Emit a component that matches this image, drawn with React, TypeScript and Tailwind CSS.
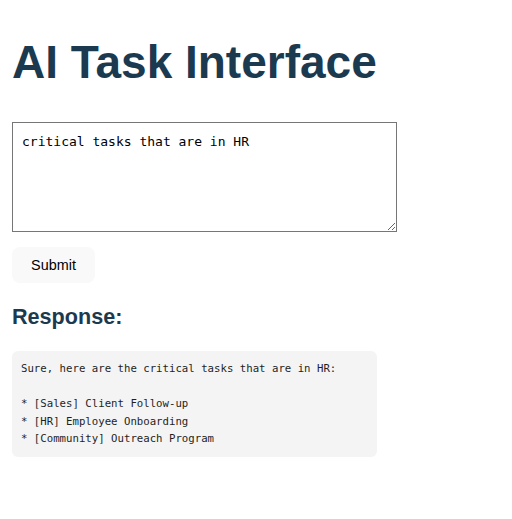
import { useState } from 'react';

const response = `Sure, here are the critical tasks that are in HR:

* [Sales] Client Follow-up
* [HR] Employee Onboarding
* [Community] Outreach Program`;

export default function App() {
  const [query, setQuery] = useState('critical tasks that are in HR');

  return (
    <div className="min-h-[519px] bg-white px-[12px] pt-[36px] font-['Liberation_Sans',Arial,sans-serif]">
      <h1 className="text-[46px] leading-[52px] font-bold text-[#1b3a4f]">AI Task Interface</h1>

      <textarea
        value={query}
        onChange={(e) => setQuery(e.target.value)}
        className="mt-[34px] block h-[110px] w-[385px] border border-[#767676] p-[9px] font-['DejaVu_Sans_Mono',monospace] text-[13px] text-black"
      />

      <button className="mt-[15px] block h-[36px] w-[83px] rounded-[8px] bg-[#f9f9f9] pt-[1px] text-[14.4px] text-black">
        Submit
      </button>

      <h2 className="mt-[21px] text-[21.6px] leading-[25px] font-bold text-[#1b3a4f]">Response:</h2>

      <pre className="mt-[22px] w-[365px] rounded-[6px] bg-[#f4f4f4] p-[9px] font-['DejaVu_Sans_Mono',monospace] text-[10.7px] leading-[17.5px] text-[#1f1f1f]">
        {response}
      </pre>
    </div>
  );
}
